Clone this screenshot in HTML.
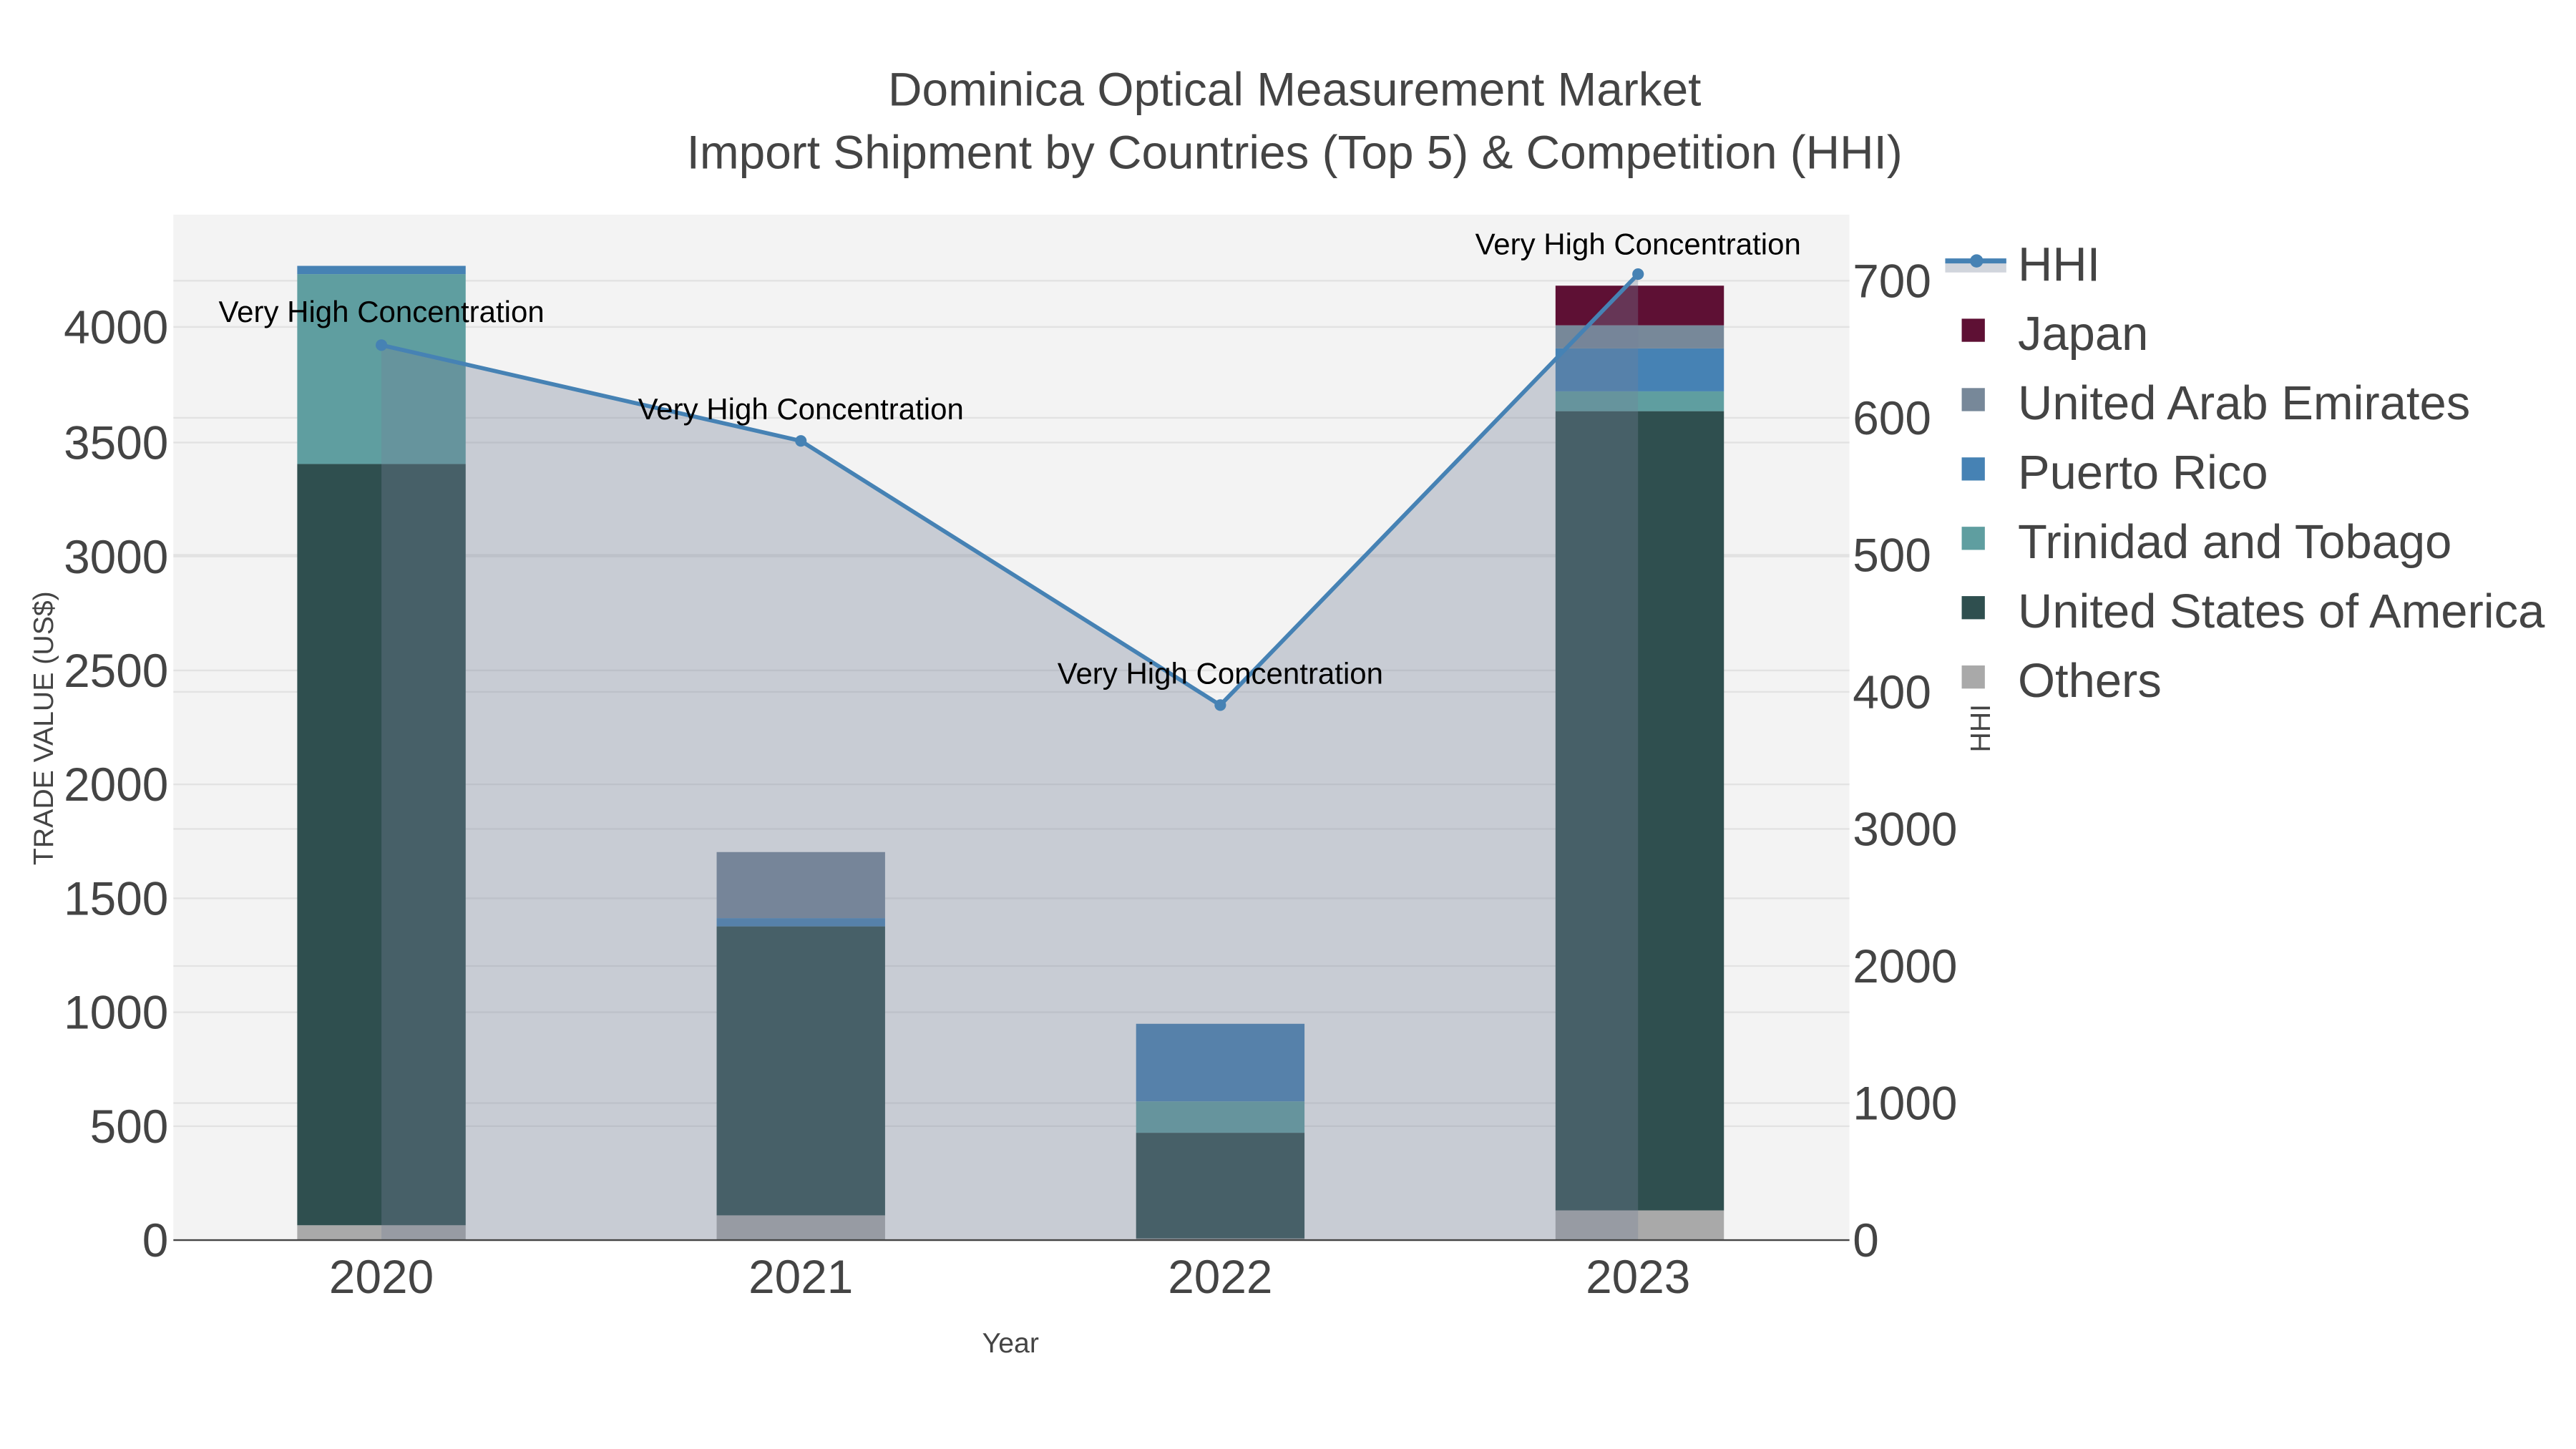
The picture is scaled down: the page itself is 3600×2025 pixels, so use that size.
<!DOCTYPE html>
<html><head><meta charset="utf-8"><style>
html,body{margin:0;padding:0;background:#fff;}
svg{display:block;}
text{font-family:"Liberation Sans",sans-serif;}
</style></head><body>
<svg width="3600" height="2025" viewBox="0 0 1560 877.5" preserveAspectRatio="none" xmlns="http://www.w3.org/2000/svg">
<rect x="0" y="0" width="1560" height="877.5" fill="#fff"/>
<rect x="105" y="130" width="1015" height="621" fill="#f3f3f3"/>
<g stroke="#e2e2e2" stroke-width="1">
<line x1="105" x2="1120" y1="682" y2="682"/><line x1="105" x2="1120" y1="613" y2="613"/>
<line x1="105" x2="1120" y1="544" y2="544"/><line x1="105" x2="1120" y1="475" y2="475"/>
<line x1="105" x2="1120" y1="406" y2="406"/><line x1="105" x2="1120" y1="337" y2="337"/>
<line x1="105" x2="1120" y1="268" y2="268"/><line x1="105" x2="1120" y1="198" y2="198"/>
<line x1="105" x2="1120" y1="668" y2="668"/><line x1="105" x2="1120" y1="585" y2="585"/>
<line x1="105" x2="1120" y1="502" y2="502"/><line x1="105" x2="1120" y1="419" y2="419"/>
<line x1="105" x2="1120" y1="336" y2="336"/><line x1="105" x2="1120" y1="253" y2="253"/>
<line x1="105" x2="1120" y1="170" y2="170"/>
</g>
<rect x="180" y="742" width="102" height="9" fill="#a9a9a9"/>
<rect x="180" y="281" width="102" height="461" fill="#2f4f4f"/>
<rect x="180" y="166" width="102" height="115" fill="#5f9ea0"/>
<rect x="180" y="161" width="102" height="5" fill="#4682b4"/>
<rect x="434" y="736" width="102" height="15" fill="#a9a9a9"/>
<rect x="434" y="561" width="102" height="175" fill="#2f4f4f"/>
<rect x="434" y="556" width="102" height="5" fill="#4682b4"/>
<rect x="434" y="516" width="102" height="40" fill="#778899"/>
<rect x="688" y="750" width="102" height="1" fill="#a9a9a9"/>
<rect x="688" y="686" width="102" height="64" fill="#2f4f4f"/>
<rect x="688" y="667" width="102" height="19" fill="#5f9ea0"/>
<rect x="688" y="620" width="102" height="47" fill="#4682b4"/>
<rect x="942" y="733" width="102" height="18" fill="#a9a9a9"/>
<rect x="942" y="249" width="102" height="484" fill="#2f4f4f"/>
<rect x="942" y="237" width="102" height="12" fill="#5f9ea0"/>
<rect x="942" y="211" width="102" height="26" fill="#4682b4"/>
<rect x="942" y="197" width="102" height="14" fill="#778899"/>
<rect x="942" y="173" width="102" height="24" fill="#5e1034"/>
<polygon points="231,209 485,267 739,427 992,166 992,751 231,751" fill="rgb(117,129,152)" fill-opacity="0.34"/>
<polyline points="231,209 485,267 739,427 992,166" fill="none" stroke="#4682b4" stroke-width="2.5"/>
<g fill="#4682b4"><circle cx="231" cy="209" r="3.5"/><circle cx="485" cy="267" r="3.5"/><circle cx="739" cy="427" r="3.5"/><circle cx="992" cy="166" r="3.5"/></g>
<line x1="105" x2="1120" y1="751" y2="751" stroke="#444" stroke-width="1"/>
<g font-size="18.2" fill="#000" text-anchor="middle">
<text x="231" y="195">Very High Concentration</text>
<text x="485" y="254">Very High Concentration</text>
<text x="739" y="414">Very High Concentration</text>
<text x="992" y="154">Very High Concentration</text>
</g>
<g font-size="28.5" fill="#444" text-anchor="middle">
<text x="784" y="64">Dominica Optical Measurement Market</text>
<text x="784" y="102">Import Shipment by Countries (Top 5) &amp; Competition (HHI)</text>
</g>
<g font-size="28.5" fill="#444" text-anchor="end">
<text x="102" y="761">0</text><text x="102" y="692">500</text><text x="102" y="623">1000</text>
<text x="102" y="554">1500</text><text x="102" y="485">2000</text><text x="102" y="416">2500</text>
<text x="102" y="347">3000</text><text x="102" y="278">3500</text><text x="102" y="208">4000</text>
</g>
<g font-size="28.5" fill="#444">
<text x="1122" y="761">0</text><text x="1122" y="678">1000</text><text x="1122" y="595">2000</text>
<text x="1122" y="512">3000</text><text x="1122" y="429">400</text><text x="1122" y="346">500</text>
<text x="1122" y="263">600</text><text x="1122" y="180">700</text>
</g>
<g font-size="28.5" fill="#444" text-anchor="middle">
<text x="231" y="783">2020</text><text x="485" y="783">2021</text><text x="739" y="783">2022</text><text x="992" y="783">2023</text>
</g>
<text x="612" y="819" font-size="17" fill="#444" text-anchor="middle">Year</text>
<text transform="translate(32,441) rotate(-90)" font-size="17" fill="#444" text-anchor="middle">TRADE VALUE (US$)</text>
<text transform="translate(1205,441) rotate(-90)" font-size="17" fill="#444" text-anchor="middle">HHI</text>
<rect x="1178" y="158" width="37" height="7" fill="#d1d5dc"/>
<line x1="1178" y1="158" x2="1215" y2="158" stroke="#4682b4" stroke-width="3"/>
<circle cx="1197" cy="158" r="4" fill="#4682b4"/>
<g font-size="29" fill="#444">
<text x="1222" y="170">HHI</text>
<text x="1222" y="212">Japan</text>
<text x="1222" y="254">United Arab Emirates</text>
<text x="1222" y="296">Puerto Rico</text>
<text x="1222" y="338">Trinidad and Tobago</text>
<text x="1222" y="380">United States of America</text>
<text x="1222" y="422">Others</text>
</g>
<rect x="1188" y="193" width="14" height="14" fill="#5e1034"/>
<rect x="1188" y="235" width="14" height="14" fill="#778899"/>
<rect x="1188" y="277" width="14" height="14" fill="#4682b4"/>
<rect x="1188" y="319" width="14" height="14" fill="#5f9ea0"/>
<rect x="1188" y="361" width="14" height="14" fill="#2f4f4f"/>
<rect x="1188" y="403" width="14" height="14" fill="#a9a9a9"/>
</svg>
</body></html>
